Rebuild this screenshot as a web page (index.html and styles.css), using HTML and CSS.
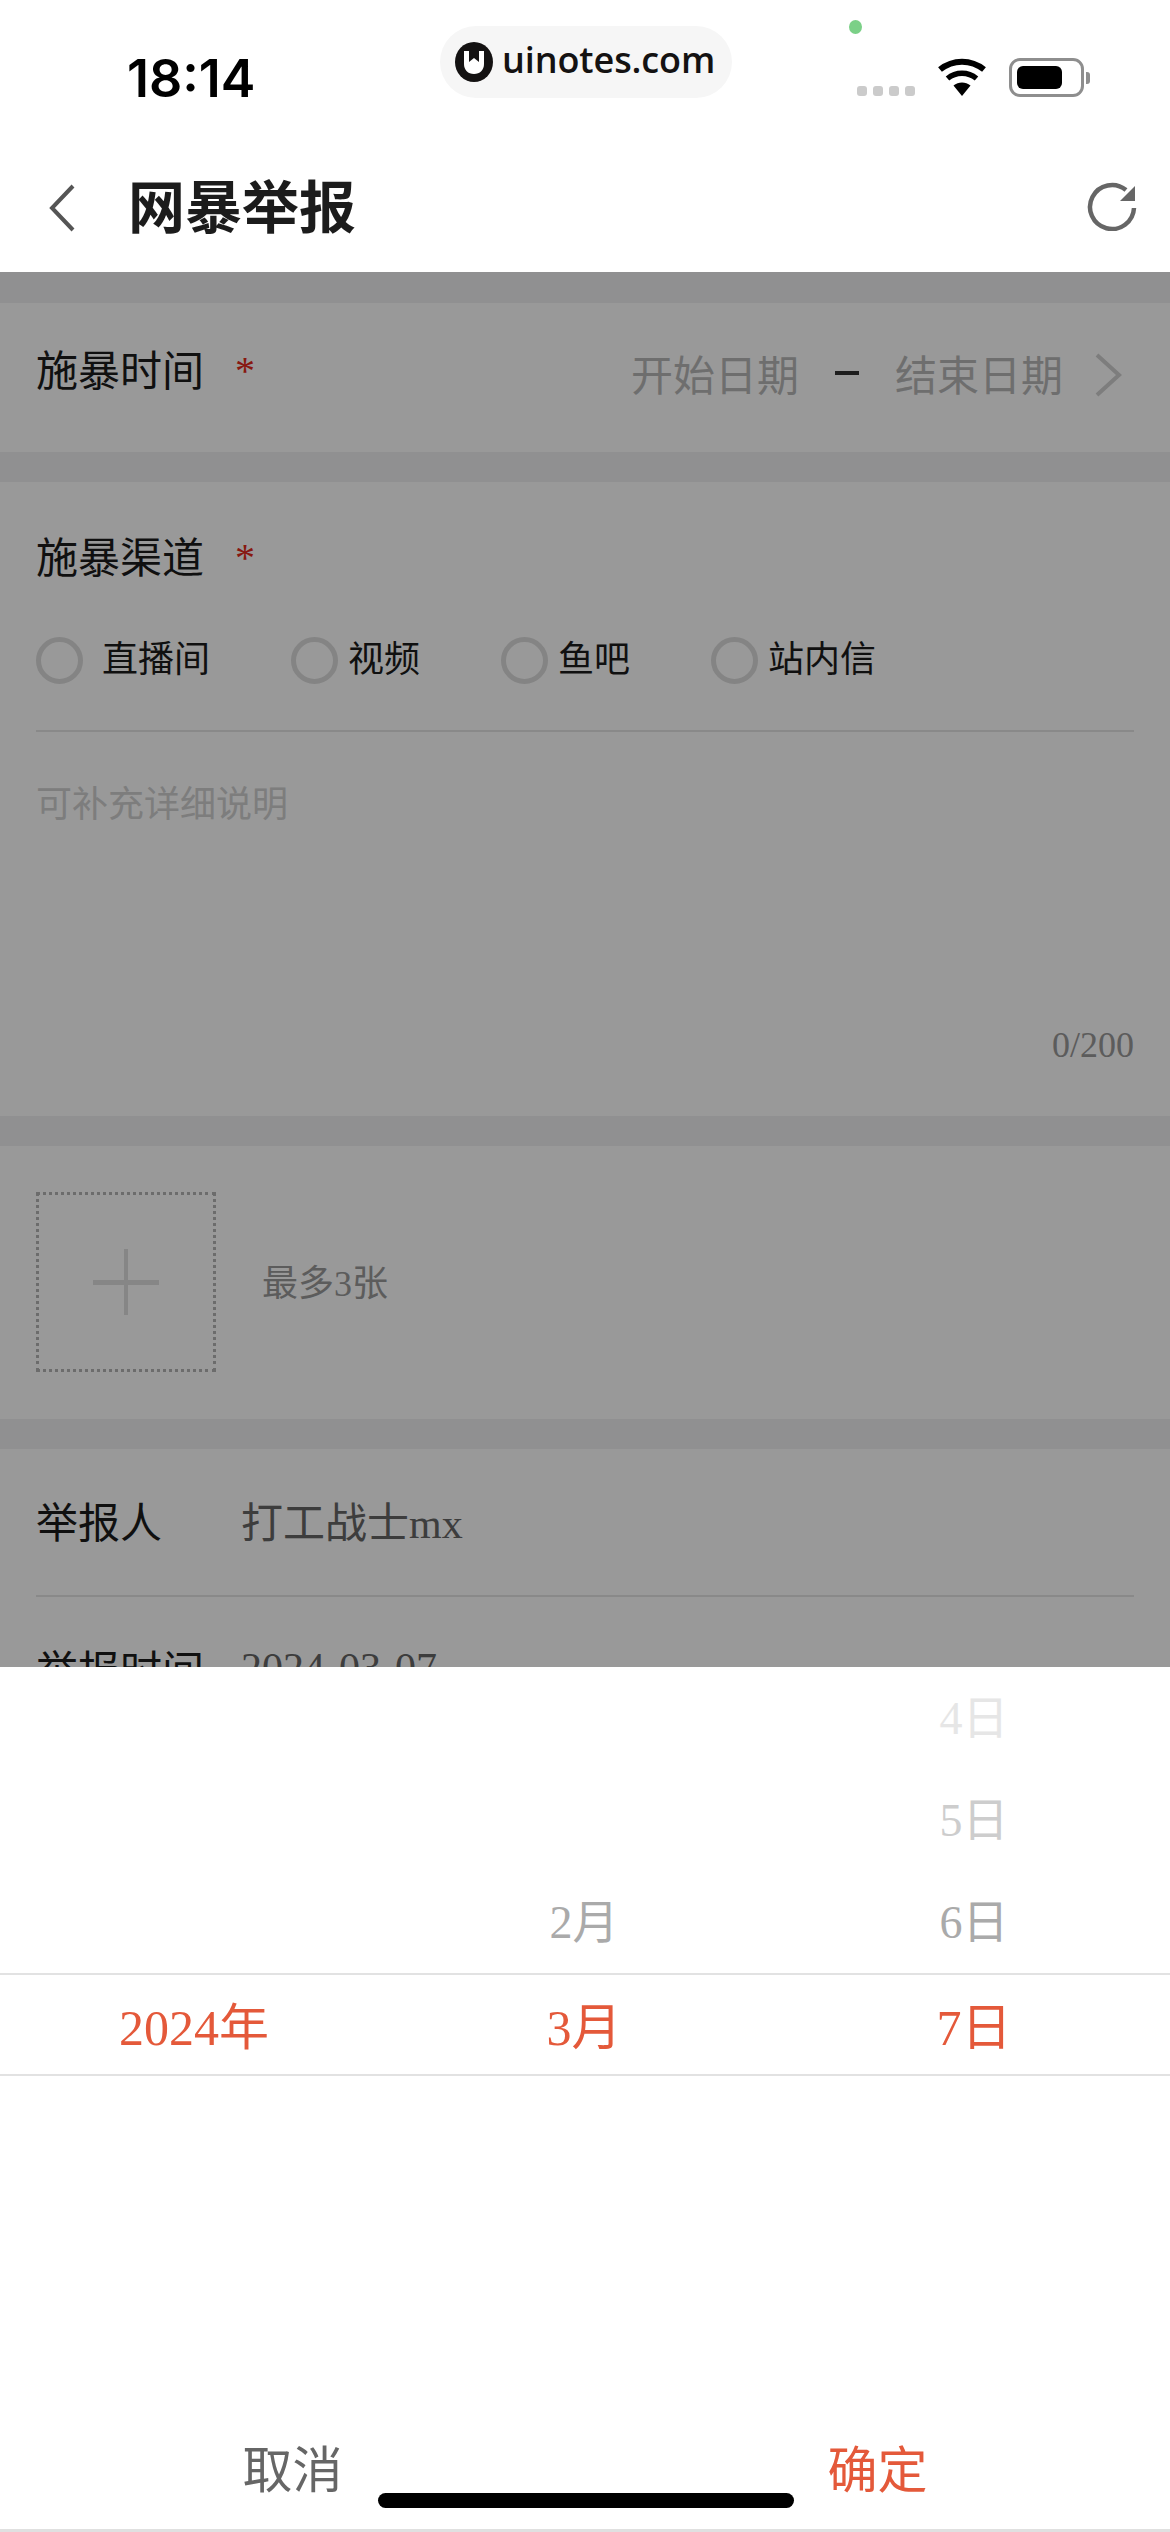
FILE: index.html
```html
<!DOCTYPE html>
<html lang="zh-CN">
<head>
  <meta charset="UTF-8" />
  <title>网暴举报</title>
  <link rel="stylesheet" href="styles.css">
</head>
<body>
  <div class="screen">
    <div class="status-bar">
      <span class="status-time">18:14</span>
      <div class="brand-pill">
        <svg class="brand-logo" width="38" height="40" viewBox="0 0 38 40">
          <ellipse cx="19" cy="20" rx="19" ry="20" fill="#141212" />
          <path d="M9 9H14V20L19 16L24 20V9H29V22C29 28 25 32 19 32C13 32 9 28 9 22Z" fill="#fff" />
        </svg>
        <span class="brand-name">uinotes.com</span>
      </div>
      <span class="camera-dot"></span>
      <div class="status-icons">
        <div class="signal">
          <span></span><span></span><span></span><span></span>
        </div>
        <svg class="wifi" width="50" height="38" viewBox="0 0 50 38">
          <path d="M25 38L16.500 27.500C21.500 23.500 28.500 23.500 33.500 27.500Z" fill="#000" />
          <path d="M10.500 20.500C19 13.500 31 13.500 39.500 20.500" fill="none" stroke="#000" stroke-width="5.500" />
          <path d="M3 11.500C16 1 34 1 47 11.500" fill="none" stroke="#000" stroke-width="6" />
        </svg>
        <div class="battery">
          <div class="battery-body"><span class="battery-fill"></span></div>
          <span class="battery-nub"></span>
        </div>
      </div>
    </div>

    <header class="nav">
      <svg class="nav-back" width="28" height="50" viewBox="0 0 28 50">
        <path d="M25 3L4 25L25 47" fill="none" stroke="#555" stroke-width="4" />
      </svg>
      <h1 class="nav-title">网暴举报</h1>
      <svg class="nav-refresh" width="52" height="50" viewBox="0 0 52 50">
        <path d="M40 9A22 22 0 1 0 48 27" fill="none" stroke="#666" stroke-width="4.500" />
        <path d="M49 5V20H34Z" fill="#666" />
      </svg>
    </header>

    <main class="form">
      <section class="card card-time">
        <div class="field-label">施暴时间<span class="required">*</span></div>
        <div class="date-range">
          <span>开始日期</span>
          <span class="date-dash"></span>
          <span>结束日期</span>
          <svg class="date-arrow" width="28" height="44" viewBox="0 0 28 44">
            <path d="M3 2L25 22L3 42" fill="none" stroke="#d0d0d0" stroke-width="4" />
          </svg>
        </div>
      </section>

      <section class="card card-channel">
        <div class="field-label">施暴渠道<span class="required">*</span></div>
        <div class="radio-row">
          <label class="radio radio-first"><span class="radio-mark"></span>直播间</label>
          <label class="radio"><span class="radio-mark"></span>视频</label>
          <label class="radio"><span class="radio-mark"></span>鱼吧</label>
          <label class="radio"><span class="radio-mark"></span>站内信</label>
        </div>
        <div class="detail-box">
          <div class="placeholder">可补充详细说明</div>
          <div class="counter">0/200</div>
        </div>
      </section>

      <section class="card card-upload">
        <div class="upload-box">
          <span class="plus-h"></span>
          <span class="plus-v"></span>
        </div>
        <span class="upload-hint">最多3张</span>
      </section>

      <section class="card card-info">
        <div class="info-row">
          <span class="info-label">举报人</span>
          <span class="info-value">打工战士mx</span>
        </div>
        <div class="info-row">
          <span class="info-label">举报时间</span>
          <span class="info-value">2024-03-07</span>
        </div>
      </section>
    </main>

    <div class="mask"></div>

    <div class="sheet">
      <div class="wheel">
        <div class="wheel-col">
          <div class="wheel-item is-selected">2024年</div>
        </div>
        <div class="wheel-col">
          <div class="wheel-item fade-1">2月</div>
          <div class="wheel-item is-selected">3月</div>
        </div>
        <div class="wheel-col">
          <div class="wheel-item fade-3">4日</div>
          <div class="wheel-item fade-2">5日</div>
          <div class="wheel-item fade-1">6日</div>
          <div class="wheel-item is-selected">7日</div>
        </div>
        <div class="wheel-band"></div>
      </div>
      <div class="sheet-actions">
        <button type="button" class="sheet-btn">取消</button>
        <button type="button" class="sheet-btn sheet-ok">确定</button>
      </div>
      <div class="home-bar"></div>
    </div>
  </div>
</body>
</html>
```

FILE: styles.css
```css
* {
  box-sizing: border-box;
}

body {
  margin: 0;
  background: #fff;
  font-family: "Liberation Serif", "Noto Sans CJK SC", serif;
  color: #1c1c1c;
}

.screen {
  position: relative;
  width: 1170px;
  height: 2532px;
  overflow: hidden;
  background: #f0f1f2;
}

/* Status bar */
.status-bar {
  position: relative;
  height: 130px;
  background: #fff;
}

.status-time {
  position: absolute;
  left: 127px;
  top: 49px;
  font-family: Inter, sans-serif;
  font-size: 52px;
  line-height: 60px;
  font-weight: 600;
  color: #000;
}

.brand-pill {
  position: absolute;
  left: 440px;
  top: 26px;
  width: 292px;
  height: 72px;
  display: flex;
  align-items: center;
  gap: 9px;
  padding-left: 15px;
  background: #f6f6f6;
  border-radius: 36px;
}

.brand-logo {
  flex: none;
}

.brand-name {
  font-family: "Open Sans", sans-serif;
  font-size: 36px;
  font-weight: 600;
  line-height: 68px;
  margin-bottom: 4px;
  color: #141212;
  letter-spacing: -0.1px;
}

.camera-dot {
  position: absolute;
  left: 849px;
  top: 20px;
  width: 13px;
  height: 14px;
  border-radius: 50%;
  background: #7bd087;
}

.status-icons {
  position: absolute;
  left: 857px;
  top: 58px;
  display: flex;
  align-items: flex-start;
}

.signal {
  display: flex;
  gap: 6px;
  margin-top: 28px;
  width: 80px;
}

.signal span {
  width: 10px;
  height: 10px;
  border-radius: 3px;
  background: #cbcbcb;
}

.battery {
  display: flex;
  align-items: center;
  margin-left: 22px;
}

.battery-body {
  width: 75px;
  height: 39px;
  padding: 5px;
  border: 3px solid #8e8e8e;
  border-radius: 11px;
}

.battery-fill {
  display: block;
  width: 45px;
  height: 100%;
  background: #000;
  border-radius: 6px;
}

.battery-nub {
  width: 4px;
  height: 12px;
  margin-left: 2px;
  background: #8e8e8e;
  border-radius: 0 3px 3px 0;
}

/* Navigation */
.nav {
  height: 142px;
  display: flex;
  align-items: center;
  padding: 14px 32px 0 48px;
  background: #fff;
}

.nav-title {
  flex: 1;
  margin: 0 0 10px 52px;
  font-family: "Noto Sans CJK SC", sans-serif;
  font-size: 57px;
  line-height: 80px;
  font-weight: 700;
  color: #1c1c1c;
}

.nav-refresh {
  margin-bottom: 4px;
}

/* Form */
.form {
  display: flex;
  flex-direction: column;
  gap: 30px;
  padding-top: 31px;
}

.card {
  background: #fff;
}

.card-time {
  height: 149px;
  display: flex;
  align-items: center;
  justify-content: space-between;
  padding: 0 48px 12px 36px;
}

.field-label {
  font-size: 42px;
  line-height: 60px;
  color: #1c1c1c;
}

.required {
  margin-left: 31px;
  font-size: 40px;
  color: #e3291a;
  vertical-align: 2px;
}

.date-range {
  display: flex;
  align-items: center;
  font-size: 42px;
  color: #b8b8b8;
  margin-top: 2px;
}

.date-dash {
  width: 24px;
  height: 4px;
  margin: 0 36px 0 36px;
  background: #333;
}

.date-arrow {
  margin: 4px 0 0 31px;
}

.card-channel {
  height: 634px;
  padding: 46px 36px 0;
}

.radio-row {
  display: flex;
  align-items: center;
  height: 125px;
  margin-top: 18px;
  border-bottom: 2px solid #e4e4e4;
  padding-bottom: 17px;
}

.radio {
  display: flex;
  align-items: center;
  gap: 10px;
  width: 210px;
  font-size: 36px;
  line-height: 48px;
  color: #1c1c1c;
}

.radio-first {
  width: 255px;
  gap: 19px;
}

.radio-mark {
  flex: none;
  width: 47px;
  height: 47px;
  border: 5px solid #dcdcdc;
  border-radius: 50%;
}

.detail-box {
  display: flex;
  flex-direction: column;
  justify-content: space-between;
  height: 335px;
  padding-top: 48px;
}

.placeholder {
  font-size: 36px;
  line-height: 50px;
  color: #d0d0d0;
}

.counter {
  align-self: flex-end;
  font-size: 36px;
  line-height: 44px;
  color: #999;
}

.card-upload {
  height: 273px;
  display: flex;
  align-items: center;
  padding: 0 36px 2px;
}

.upload-box {
  position: relative;
  width: 180px;
  height: 180px;
  border: 3px dotted #b4b4b4;
}

.plus-h,
.plus-v {
  position: absolute;
  background: #e0e0e0;
}

.plus-h {
  left: 54px;
  top: 85px;
  width: 66px;
  height: 5px;
}

.plus-v {
  left: 85px;
  top: 54px;
  width: 4px;
  height: 66px;
}

.upload-hint {
  margin: 0 0 4px 46px;
  font-size: 36px;
  color: #999;
}

.info-row {
  height: 148px;
  display: flex;
  align-items: center;
  margin: 0 36px;
  padding-bottom: 5px;
  border-bottom: 2px solid #e4e4e4;
}

.info-label {
  width: 205px;
  font-size: 42px;
  color: #1c1c1c;
}

.info-value {
  font-size: 42px;
  color: #666;
}

/* Dimmed layer under the picker */
.mask {
  position: absolute;
  left: 0;
  right: 0;
  top: 272px;
  bottom: 0;
  background: rgba(0, 0, 0, 0.4);
}

/* Date picker sheet */
.sheet {
  position: absolute;
  left: 0;
  right: 0;
  top: 1667px;
  bottom: 0;
  background: #fff;
  border-bottom: 3px solid #e0e0e0;
}

.wheel {
  position: relative;
  display: grid;
  grid-template-columns: repeat(3, 1fr);
  height: 409px;
}

.wheel-col {
  display: flex;
  flex-direction: column;
  justify-content: flex-end;
}

.wheel-item {
  height: 102px;
  display: flex;
  align-items: center;
  justify-content: center;
  padding: 0 2px 12px 0;
  font-size: 46px;
}

.wheel-item.is-selected {
  height: 101px;
  padding-bottom: 6px;
  font-size: 50px;
  color: #e4593a;
}

.fade-1 {
  color: #aaa;
}

.fade-2 {
  color: #cdcdcd;
}

.fade-3 {
  color: #e6e6e6;
}

.wheel-band {
  position: absolute;
  left: 0;
  right: 0;
  bottom: 0;
  height: 103px;
  border-top: 2px solid #e2e2e2;
  border-bottom: 2px solid #e2e2e2;
}

.sheet-actions {
  display: grid;
  grid-template-columns: 1fr 1fr;
  margin-top: 360px;
}

.sheet-btn {
  padding: 0;
  border: none;
  background: none;
  font-family: inherit;
  font-size: 50px;
  line-height: 70px;
  color: #666;
}

.sheet-ok {
  color: #e4593a;
}

.home-bar {
  position: absolute;
  left: 378px;
  top: 826px;
  width: 416px;
  height: 15px;
  border-radius: 8px;
  background: #000;
}
```
